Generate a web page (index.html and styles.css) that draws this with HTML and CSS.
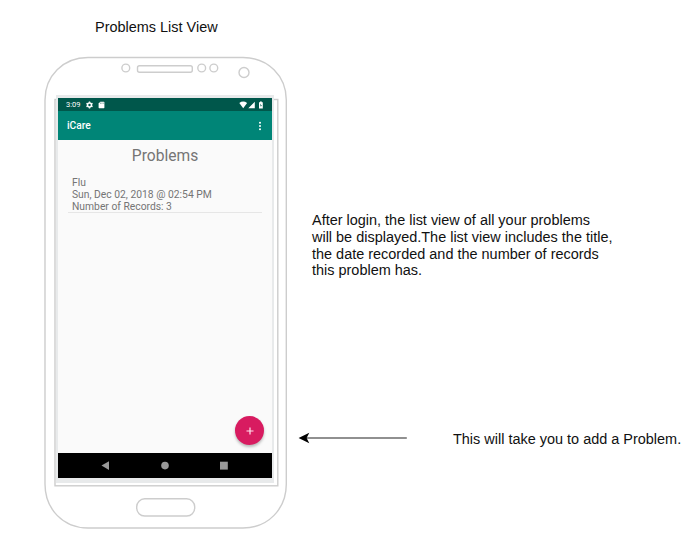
FILE: index.html
```html
<!DOCTYPE html>
<html lang="en">
<head>
<meta charset="utf-8">
<title>Problems List View</title>
<link rel="stylesheet" href="styles.css">
</head>
<body>
<main class="canvas">
  <h1 class="node caption">Problems List View</h1>

  <section class="node phone">
    <svg class="phone-outline" width="244" height="474" viewBox="43 56 244 474">
      <g fill="none" stroke="#cdcdcd" stroke-width="1.4">
        <path d="M45 100C45 76 63 57.500 88 57.500H243C268 57.500 286.300 76 286.300 100V484C286.300 509 268 528 243 528H88C63 528 45 509 45 484Z"/>
        <circle cx="125.800" cy="68" r="3.900"/>
        <rect x="137.500" y="65.800" width="54.800" height="6.400" rx="2"/>
        <circle cx="201.700" cy="68" r="3.900"/>
        <circle cx="213.800" cy="68" r="3.900"/>
        <circle cx="244" cy="72.500" r="5"/>
        <rect x="55" y="99.500" width="222.800" height="386.300"/>
        <rect x="136.700" y="498.800" width="58" height="17.200" rx="8"/>
      </g>
    </svg>
    <div class="screen">
      <div class="status">
        <span class="clock">3:09</span>
        <svg class="status-left" width="20" height="8" viewBox="0 0 20 8">
          <circle cx="3.500" cy="4" r="2" fill="none" stroke="#fff" stroke-width="1.600"/>
          <path d="M3.500.5v1.200M3.500 6.300v1.200M.5 2.250l1 .6M5.500 5.150l1 .6M.5 5.750l1-.6M5.500 2.850l1-.6" stroke="#fff" stroke-width="1.400"/>
          <path d="M14.300.8h3.500q.6 0 .6.600v5.200q0 .600-.6.600h-4.600q-.6 0-.6-.6V2.500Z" fill="#fff"/>
          <path d="M14.500 1.600v1.200M15.900 1.600v1.200M17.300 1.600v1.200" stroke="#00574b" stroke-width=".5"/>
        </svg>
        <svg class="status-right" width="26" height="8" viewBox="0 0 26 8">
          <path d="M.3 2Q4.200-.9 8.100 2L4.200 7.200ZM15.800.7v6.500H9.300ZM20 1.200h1v-.7h1.800v.7h1v6.200H20Z" fill="#fff"/>
          <path d="M22 2.500L21 4.600h.8v1.500l1-2.200H22Z" fill="#00574b"/>
        </svg>
      </div>
      <header class="appbar">
        <span>iCare</span>
        <svg width="4" height="12" viewBox="0 0 4 12" fill="#fff"><circle cx="2" cy="2.700" r="1"/><circle cx="2" cy="6" r="1"/><circle cx="2" cy="9.300" r="1"/></svg>
      </header>
      <div class="content">
        <h2>Problems</h2>
        <div class="record">
          <div>Flu</div>
          <div>Sun, Dec 02, 2018 @ 02:54 PM</div>
          <div>Number of Records: 3</div>
        </div>
        <div class="fab"><svg width="8" height="8" viewBox="0 0 8 8"><path d="M4 .5v7M.5 4h7" stroke="#ffe4ee" stroke-width="1.200"/></svg></div>
      </div>
      <nav class="navbar">
        <svg width="214" height="25" viewBox="0 0 214 25" fill="#999"><path d="M43.500 12.600L51 8.300V17Z"/><circle cx="107" cy="12.600" r="3.800"/><rect x="162" y="8.700" width="7.800" height="7.900"/></svg>
      </nav>
    </div>
  </section>

  <p class="node note">After login, the list view of all your problems<br>will be displayed.The list view includes the title,<br>the date recorded and the number of records<br>this problem has.</p>
  <svg class="node arrow" width="112" height="14" viewBox="297 431 112 14"><path d="M304 438H406.800" stroke="#222" stroke-width="1.200"/><path d="M298.600 438L309.300 432.700L306.600 438L309.300 443.300Z"/></svg>
  <p class="node hint">This will take you to add a Problem.</p>
</main>
</body>
</html>
```
FILE: styles.css
```css
* { box-sizing: border-box; }
body { margin: 0; background: #fff; }
h1, h2, p { margin: 0; font-weight: 400; }
svg { display: block; }
.canvas {
  position: relative;
  width: 694px;
  height: 545px;
  overflow: hidden;
  font-family: "Liberation Sans", Arial, sans-serif;
  font-size: 14.460px;
  line-height: 16.800px;
  color: #111;
  white-space: nowrap;
}
.node { position: absolute; }
.caption { left: 95px; top: 19px; font-size: 14.460px; }
.note { left: 312px; top: 212px; }
.hint { left: 453px; top: 431px; }
.arrow { left: 297px; top: 431px; }
.phone { left: 43px; top: 56px; width: 244px; height: 474px; padding: 39px 0 0 13px; }
.phone-outline { position: absolute; left: 0; top: 0; }
.screen {
  position: relative;
  display: flex;
  flex-direction: column;
  width: 218px;
  height: 388px;
  border: solid #e8eaeb;
  border-width: 3px 2px 5px 2px;
  background: #fafafa;
  font-family: Roboto, sans-serif;
}
.status {
  display: flex;
  align-items: center;
  height: 13px;
  padding: 1px 7px 0 8px;
  background: #00574b;
  color: #fff;
  font-size: 7.500px;
  line-height: 12px;
}
.clock { width: 20px; }
.status-right { margin-left: auto; }
.appbar {
  display: flex;
  align-items: center;
  justify-content: space-between;
  height: 29px;
  padding: 1px 10px 0 9px;
  background: #008577;
  color: #fff;
  font-size: 10.200px;
  font-weight: 500;
}
.content { position: relative; flex: 1; padding: 7px 10px 0 10px; color: #757575; }
h2 { font-size: 15.600px; line-height: 19px; text-align: center; }
.record {
  height: 37px;
  margin-top: 10px;
  padding: 1px 0 0 4px;
  border-bottom: 1px solid #e6e6e6;
  font-size: 10.320px;
  line-height: 12.200px;
}
.fab {
  position: absolute;
  right: 8px;
  bottom: 8px;
  display: flex;
  align-items: center;
  justify-content: center;
  width: 29px;
  height: 29px;
  border-radius: 50%;
  background: #d81b60;
  box-shadow: 0 2px 3px #0004;
}
.navbar { height: 25px; background: #000; }
```
